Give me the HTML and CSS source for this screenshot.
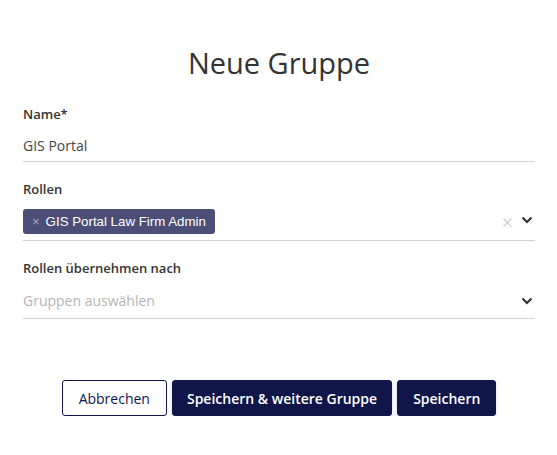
FILE: index.html
```html
<!DOCTYPE html>
<html lang="de">
<head>
<meta charset="UTF-8" />
<title>Neue Gruppe</title>
<link rel="stylesheet" href="styles.css">
</head>
<body>
<main class="dialog">
  <h1 class="title">Neue Gruppe</h1>

  <div class="field field-name">
    <label class="field-label" for="name">Name*</label>
    <div class="control control-text">
      <input id="name" class="text-input" type="text" value="GIS Portal" />
    </div>
  </div>

  <div class="field field-roles">
    <div class="field-label">Rollen</div>
    <div class="control">
      <div class="values">
        <span class="chip"><span class="chip-x">×</span>GIS Portal Law Firm Admin</span>
      </div>
      <span class="clear">
        <svg width="9" height="9" viewBox="0 0 9 9"><path d="M0.5 0.5L8.5 8.5M8.5 0.5L0.5 8.5" stroke="#c8c8c8" stroke-width="1.1" fill="none"/></svg>
      </span>
      <span class="arrow arrow-raised">
        <svg width="12" height="8" viewBox="0 0 12 8"><path d="M1.5 1.5L6 6L10.5 1.5" stroke="#333" stroke-width="2.2" fill="none"/></svg>
      </span>
    </div>
  </div>

  <div class="field">
    <div class="field-label">Rollen übernehmen nach</div>
    <div class="control control-single">
      <div class="values placeholder">Gruppen auswählen</div>
      <span class="arrow">
        <svg width="12" height="8" viewBox="0 0 12 8"><path d="M1.5 1.5L6 6L10.5 1.5" stroke="#333" stroke-width="2.2" fill="none"/></svg>
      </span>
    </div>
  </div>

  <div class="actions">
    <button class="btn btn-outline" type="button">Abbrechen</button>
    <button class="btn btn-primary btn-wide" type="button">Speichern &amp; weitere Gruppe</button>
    <button class="btn btn-primary" type="button">Speichern</button>
  </div>
</main>
</body>
</html>
```

FILE: styles.css
```css
* {
  box-sizing: border-box;
}
body {
  margin: 0;
  background: #fff;
  font-family: 'Open Sans', sans-serif;
  color: #333;
}
.dialog {
  padding: 43px 22px 0 23px;
}
.title {
  margin: 0 0 22px;
  text-align: center;
  font-size: 29px;
  font-weight: 400;
  line-height: 40px;
  color: #333;
}
.field {
  margin-bottom: 19px;
}
.field-name {
  margin-bottom: 18px;
}
.field-roles {
  margin-bottom: 18px;
}
.field-label {
  display: block;
  margin-bottom: 6px;
  font-size: 13px;
  font-weight: 600;
  line-height: 18px;
  color: #333;
}
.control {
  display: flex;
  align-items: center;
  height: 37px;
  border-bottom: 1px solid #d0d0d0;
}
.control-text {
  height: 33px;
}
.control-single {
  height: 36px;
}
.text-input {
  border: none;
  outline: none;
  padding: 0;
  width: 100%;
  font-family: 'Open Sans', sans-serif;
  font-size: 14px;
  color: #444;
}
.values {
  flex: 1;
  display: flex;
  align-items: center;
}
.placeholder {
  font-size: 14px;
  color: #b4b4b4;
}
.chip {
  display: inline-flex;
  align-items: center;
  background: #4b4e76;
  color: #fff;
  border-radius: 3px;
  height: 25px;
  margin-top: -1px;
  padding: 0 9px;
  font-family: 'Liberation Sans', Arial, sans-serif;
  font-size: 13.3px;
}
.chip-x {
  color: #a7a9bf;
  font-size: 13px;
  margin-right: 6px;
}
.clear {
  display: flex;
  margin-right: 9px;
}
.arrow {
  display: flex;
  margin-right: 2px;
}
.arrow-raised {
  margin-bottom: 4px;
}
.actions {
  display: flex;
  justify-content: center;
  gap: 5px;
  margin-top: 61px;
}
.btn {
  height: 36px;
  padding: 0 15px;
  border-radius: 3px;
  font-family: 'Open Sans', sans-serif;
  font-size: 14px;
  cursor: pointer;
}
.btn-outline {
  padding: 0 16px;
  background: #fff;
  border: 1px solid #10154a;
  color: #10154a;
}
.btn-primary {
  background: #10154a;
  border: 1px solid #10154a;
  color: #fff;
  font-weight: 600;
  box-shadow: 0 2px 4px rgba(0, 0, 0, 0.15);
}
.btn-wide {
  padding: 0 14px;
}
```
